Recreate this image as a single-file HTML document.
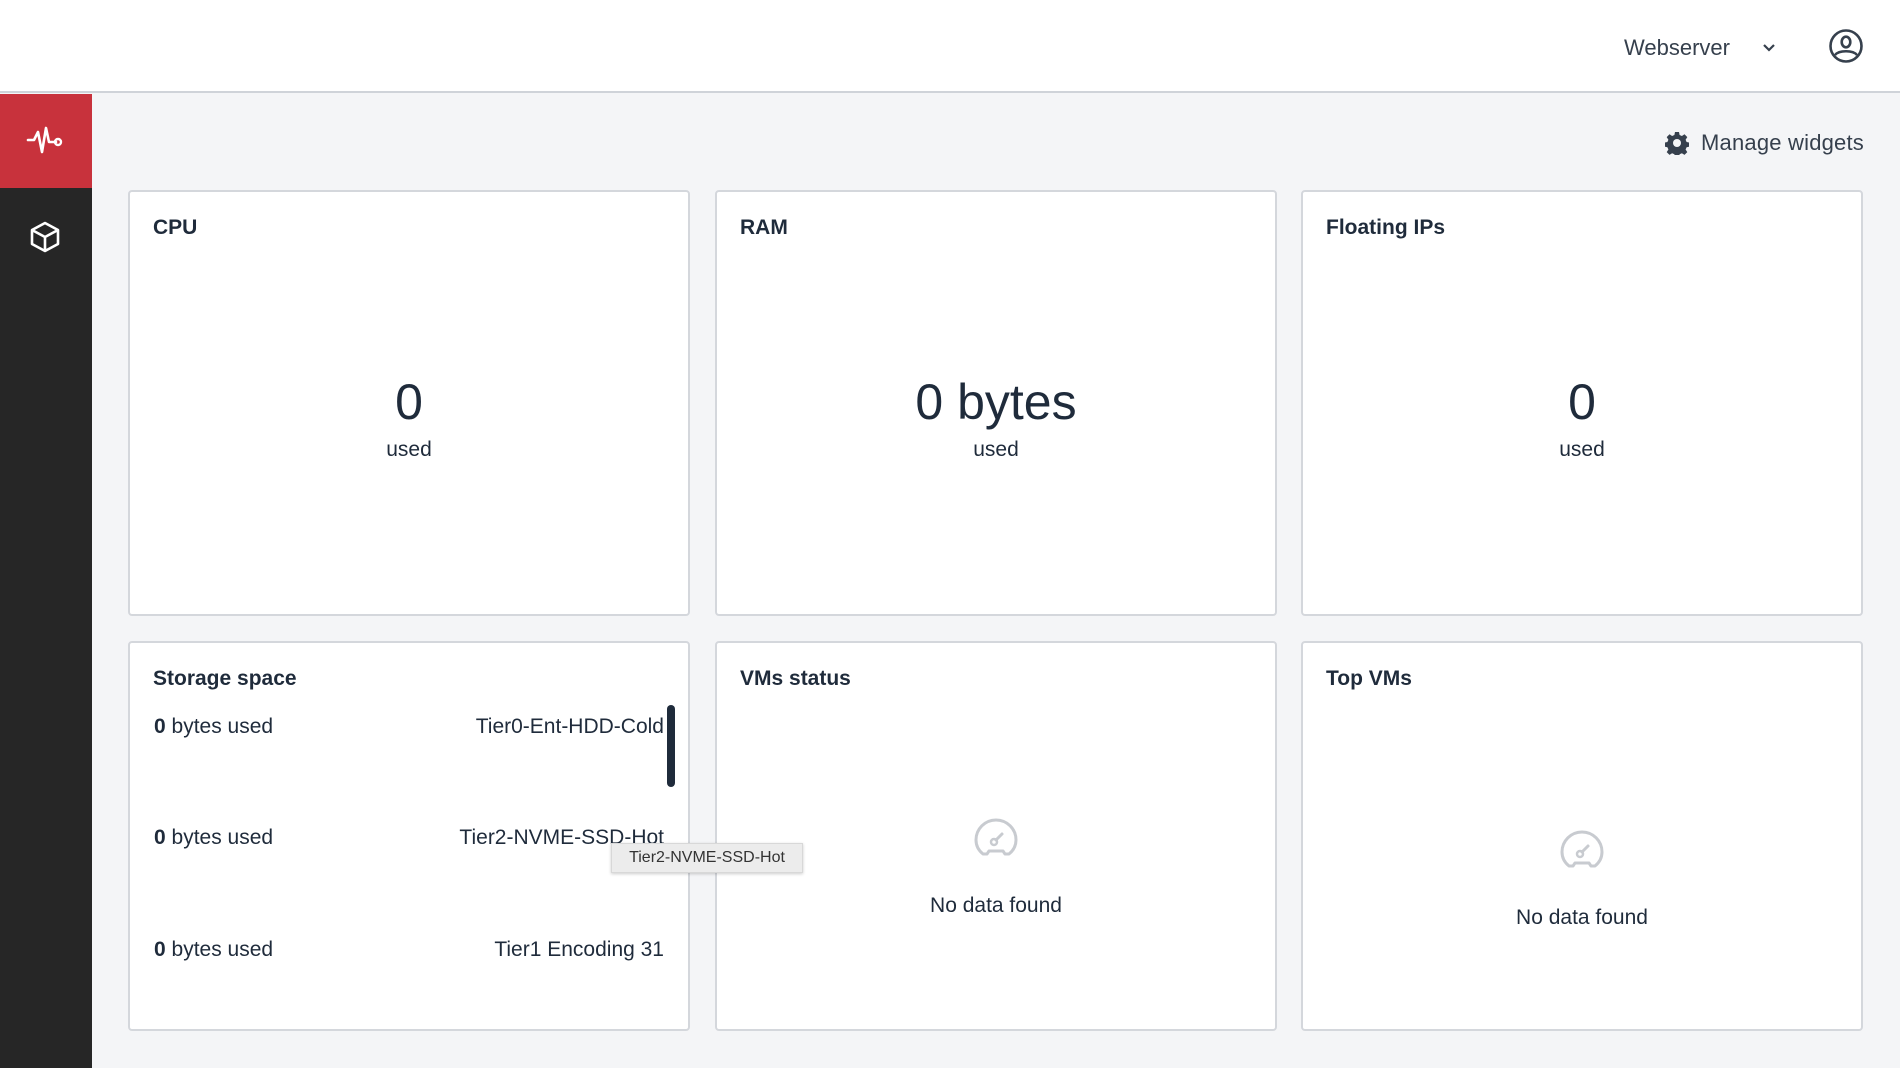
<!DOCTYPE html>
<html><head><meta charset="utf-8"><style>
*{box-sizing:border-box;margin:0;padding:0}
body{width:1900px;height:1068px;overflow:hidden;background:#f4f5f7;font-family:"Liberation Sans",sans-serif;color:#1f2b3b;position:relative}
.hdr{position:absolute;left:0;top:0;width:1900px;height:93px;background:#fff;border-bottom:2px solid #cfd3d9}
.side{position:absolute;left:0;top:94px;width:92px;height:974px;background:#262626}
.red{position:absolute;left:0;top:94px;width:92px;height:94px;background:#c8323c}
.card{position:absolute;background:#fff;border:2px solid #d4d7dc;border-radius:4px}
.t{position:absolute;left:23px;top:24px;font-size:21px;font-weight:600}
.big{position:absolute;left:0;right:0;text-align:center;font-size:50px;top:181px}
.used{position:absolute;left:0;right:0;text-align:center;font-size:21px;top:246px}
.row{position:absolute;left:24px;right:24px;font-size:21px}
.row b{font-weight:700}
.row span{position:absolute;right:0;top:0}
.nd{position:absolute;left:0;right:0;text-align:center;font-size:21px}
</style></head><body>
<div class="hdr">
<div style="position:absolute;left:1624px;top:35px;font-size:22px;color:#36404d">Webserver</div>
<svg style="position:absolute;left:1761px;top:42px" width="16" height="12" viewBox="0 0 16 12"><path d="M3 3l5 5 5-5" stroke="#36404d" stroke-width="2.2" fill="none"/></svg>
<svg style="position:absolute;left:1828px;top:28px" width="36" height="36" viewBox="0 0 36 36"><circle cx="18" cy="18" r="15.5" stroke="#36404d" stroke-width="2.6" fill="none"/><ellipse cx="18" cy="14" rx="4.3" ry="5.3" stroke="#36404d" stroke-width="2.6" fill="none"/><path d="M7 27c4-5 18-5 22 0" stroke="#36404d" stroke-width="2.6" fill="none"/></svg>
</div>
<div class="side"></div>
<div class="red"></div>
<svg style="position:absolute;left:26px;top:124px" width="38" height="34" viewBox="0 0 38 34"><path d="M2 16h6l4-8 4 20 4-24 3 14h7" stroke="#fff" stroke-width="2.6" fill="none" stroke-linejoin="round" stroke-linecap="round"/><circle cx="32" cy="18" r="3" stroke="#fff" stroke-width="2.4" fill="none"/></svg>
<svg style="position:absolute;left:28px;top:220px" width="34" height="34" viewBox="0 0 34 34"><path d="M17 3l13 7v14l-13 7-13-7V10z M4 10l13 7 13-7 M17 17v14" stroke="#fff" stroke-width="2.6" fill="none" stroke-linejoin="round"/></svg>

<svg style="position:absolute;left:1665px;top:131px" width="24" height="24" viewBox="0 0 24 24"><path fill="#36404d" d="M10 1h4l.6 3 2.3 1 2.6-1.7 2.8 2.8-1.7 2.6 1 2.3 3 .6v4l-3 .6-1 2.3 1.7 2.6-2.8 2.8-2.6-1.7-2.3 1-.6 3h-4l-.6-3-2.3-1-2.6 1.7-2.8-2.8 1.7-2.6-1-2.3-3-.6v-4l3-.6 1-2.3-1.7-2.6 2.8-2.8 2.6 1.7 2.3-1z"/><circle cx="12" cy="12" r="4" fill="#f4f5f7"/></svg>
<div style="position:absolute;left:1701px;top:130px;font-size:22px;letter-spacing:0.2px;color:#36404d">Manage widgets</div>

<div class="card" style="left:128px;top:190px;width:562px;height:426px"><div class="t">CPU</div><div class="big">0</div><div class="used">used</div></div>
<div class="card" style="left:715px;top:190px;width:562px;height:426px"><div class="t">RAM</div><div class="big">0 bytes</div><div class="used">used</div></div>
<div class="card" style="left:1301px;top:190px;width:562px;height:426px"><div class="t">Floating IPs</div><div class="big">0</div><div class="used">used</div></div>

<div class="card" style="left:128px;top:641px;width:562px;height:390px"><div class="t">Storage space</div>
<div class="row" style="top:72px"><b>0</b> bytes used<span>Tier0-Ent-HDD-Cold</span></div>
<div class="row" style="top:183px"><b>0</b> bytes used<span>Tier2-NVME-SSD-Hot</span></div>
<div class="row" style="top:295px"><b>0</b> bytes used<span>Tier1 Encoding 31</span></div>
<div style="position:absolute;left:537px;top:62px;width:8px;height:82px;border-radius:4px;background:#1f2b3b"></div>
</div>
<div class="card" style="left:715px;top:641px;width:562px;height:390px"><div class="t">VMs status</div>
<svg style="position:absolute;left:256px;top:175px" width="46" height="40" viewBox="0 0 46 40"><path d="M10 36c-5-4-7-9-7-14a20 20 0 0 1 40 0c0 5-2 10-7 14h-4l-2-3h-14l-2 3z" stroke="#c8cbd0" stroke-width="3" fill="none" stroke-linejoin="round"/><circle cx="21" cy="24" r="3" stroke="#c8cbd0" stroke-width="2.5" fill="none"/><path d="M23 22l6-6" stroke="#c8cbd0" stroke-width="3" stroke-linecap="round"/></svg>
<div class="nd" style="top:251px">No data found</div></div>
<div class="card" style="left:1301px;top:641px;width:562px;height:390px"><div class="t">Top VMs</div>
<svg style="position:absolute;left:256px;top:187px" width="46" height="40" viewBox="0 0 46 40"><path d="M10 36c-5-4-7-9-7-14a20 20 0 0 1 40 0c0 5-2 10-7 14h-4l-2-3h-14l-2 3z" stroke="#c8cbd0" stroke-width="3" fill="none" stroke-linejoin="round"/><circle cx="21" cy="24" r="3" stroke="#c8cbd0" stroke-width="2.5" fill="none"/><path d="M23 22l6-6" stroke="#c8cbd0" stroke-width="3" stroke-linecap="round"/></svg>
<div class="nd" style="top:263px">No data found</div></div>

<div style="position:absolute;left:611px;top:843px;width:192px;height:30px;background:#ececec;border:1px solid #d8d8d8;box-shadow:0 1px 3px rgba(0,0,0,.2);font-size:16px;line-height:28px;text-align:center;color:#333">Tier2-NVME-SSD-Hot</div>
</body></html>
